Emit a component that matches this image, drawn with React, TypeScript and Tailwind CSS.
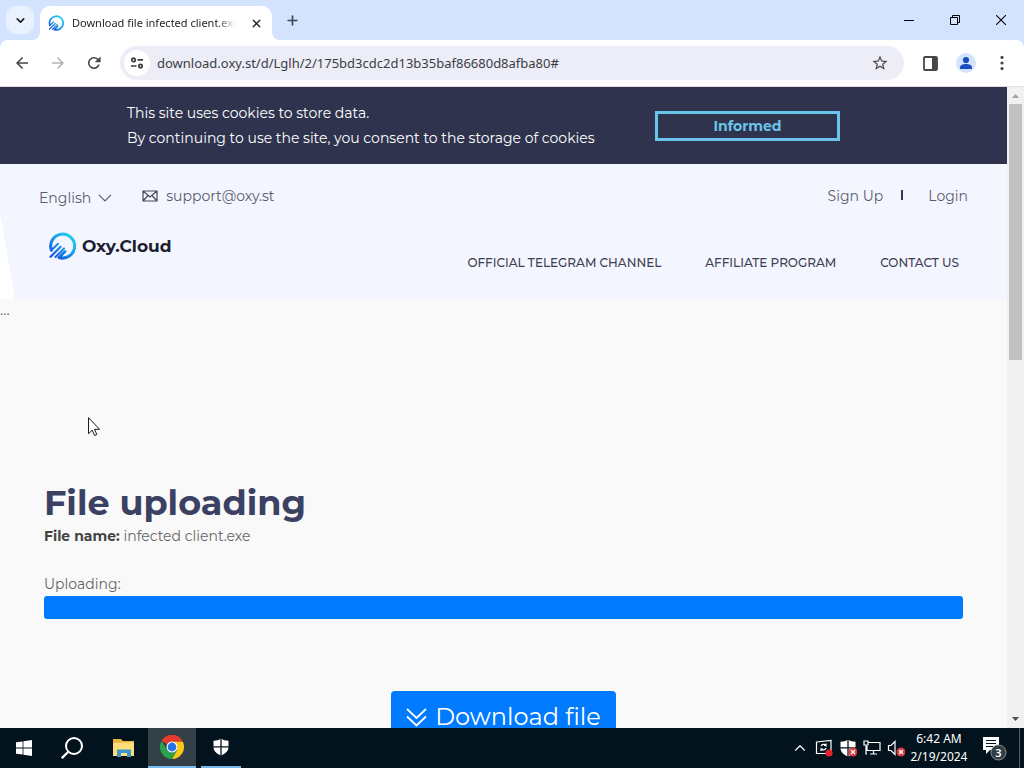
import React from "react";
import { ChevronDown, ChevronUp, Plus, X } from "lucide-react";

const site = "font-['Montserrat','Inter',sans-serif]";
const system = "font-['Noto_Sans','Open_Sans',sans-serif]";

function OxyLogo({ className, id }: { className: string; id: string }) {
  return (
    <svg viewBox="0 0 28 28" className={className} fill="none" aria-hidden="true">
      <defs>
        <linearGradient id={id} x1="24" y1="3" x2="5" y2="26" gradientUnits="userSpaceOnUse">
          <stop offset="0" stopColor="#1fd3ec" />
          <stop offset="0.5" stopColor="#1a96ea" />
          <stop offset="1" stopColor="#1450e0" />
        </linearGradient>
      </defs>
      <g stroke={`url(#${id})`} strokeLinecap="round">
        <path d="M3.4 18.2A12 12 0 1 1 11 25.500L17 19.500" strokeWidth="3" strokeLinejoin="round" />
        <path d="M3.400 18.200L10 11.800" strokeWidth="2" />
        <path d="M2.600 24.800L12.600 14.800" strokeWidth="2.200" />
        <path d="M7.500 25L16 16.500" strokeWidth="2" />
      </g>
    </svg>
  );
}

function TabStrip() {
  return (
    <div className="flex h-10 shrink-0 items-end bg-[#d3e3fd]">
      <button aria-label="Search tabs" className="mb-1.5 ml-1.5 flex size-7 items-center justify-center rounded-[10px] bg-[#e9f0fe] text-[#1f1f1f]">
        <ChevronDown size={13} strokeWidth={3} />
      </button>
      <svg viewBox="0 0 8 8" className="-ml-0.5 size-2 shrink-0 fill-white" aria-hidden="true">
        <path d="M8 0v8H0a8 8 0 0 0 8-8z" />
      </svg>
      <div className="flex h-[34px] w-[232px] items-center rounded-t-[10px] bg-white pl-2 pr-1.5">
        <OxyLogo id="tabLogo" className="size-4 shrink-0" />
        <span className="ml-2 w-[164px] overflow-hidden whitespace-nowrap text-[11px] leading-4 text-[#1f1f1f] [mask-image:linear-gradient(to_right,black_144px,transparent_164px)]">
          Download file infected client.exe
        </span>
        <button aria-label="Close tab" className="ml-auto flex size-5 shrink-0 items-center justify-center text-[#1f1f1f]">
          <X size={13} strokeWidth={2.5} />
        </button>
      </div>
      <svg viewBox="0 0 8 8" className="size-2 shrink-0 fill-white" aria-hidden="true">
        <path d="M0 0v8h8a8 8 0 0 1-8-8z" />
      </svg>
      <button aria-label="New tab" className="-ml-0.5 mb-1.5 flex size-7 items-center justify-center text-[#3c4658]">
        <Plus size={15} strokeWidth={2.6} />
      </button>
      <div className="ml-auto flex h-full text-black">
        <button aria-label="Minimize" className="flex w-[46px] items-center justify-center">
          <svg viewBox="0 0 10 10" className="size-2.5" stroke="currentColor"><path d="M0 5.5h10" /></svg>
        </button>
        <button aria-label="Restore" className="flex w-[46px] items-center justify-center">
          <svg viewBox="0 0 10 10" className="size-2.5" fill="none" stroke="currentColor"><path d="M.5 2.5h7v7h-7zM2.5 2.5v-2h7v7h-2" /></svg>
        </button>
        <button aria-label="Close" className="flex w-[46px] items-center justify-center">
          <svg viewBox="0 0 10 10" className="size-2.5" stroke="currentColor" strokeWidth="1.1"><path d="M0 0l10 10M10 0L0 10" /></svg>
        </button>
      </div>
    </div>
  );
}

function Toolbar() {
  return (
    <div className="bg-[#d3e3fd]">
      <div className="flex h-[47px] shrink-0 items-center rounded-t-lg border-b border-[#dfe1e8] bg-white pl-1 pr-1 text-[#474747]">
        <button aria-label="Back" className="flex size-9 items-center justify-center">
          <svg viewBox="0 0 24 24" className="size-[18px]" fill="currentColor"><path d="M20 10.9H7.9l5.6-5.5L12 4l-8 8 8 8 1.5-1.4-5.6-5.5H20z" /></svg>
        </button>
        <button aria-label="Forward" disabled className="flex size-9 items-center justify-center text-[#b4b4b4]">
          <svg viewBox="0 0 24 24" className="size-[18px]" fill="currentColor"><path d="M4 10.9h12.1l-5.6-5.5L12 4l8 8-8 8-1.5-1.4 5.6-5.5H4z" /></svg>
        </button>
        <button aria-label="Reload" className="flex size-9 items-center justify-center">
          <svg viewBox="0 0 24 24" className="size-[18px]" fill="currentColor"><path d="M17.65 6.35A8 8 0 1 0 19.73 14h-2.2A5.9 5.9 0 1 1 16.2 7.8L13 11h7.8V3.2z" /></svg>
        </button>
        <div className="ml-2 flex h-[34px] min-w-0 flex-1 items-center rounded-full bg-[#ecedf7] pl-1 pr-2">
          <button aria-label="View site information" className="flex size-[26px] shrink-0 items-center justify-center rounded-full bg-white">
            <svg viewBox="0 0 16 16" className="size-4" fill="none" stroke="#3c3c3c" strokeWidth="1.7">
              <circle cx="4.500" cy="4.9" r="1.7" /><path d="M8.500 4.9h5.500M2 11H7.500" /><circle cx="11.500" cy="11" r="1.7" />
            </svg>
          </button>
          <input
            aria-label="Address and search bar"
            className="ml-[7px] min-w-0 flex-1 bg-transparent text-[13px] leading-5 text-[#3b3d44] outline-none"
            defaultValue="download.oxy.st/d/Lglh/2/175bd3cdc2d13b35baf86680d8afba80#"
          />
          <button aria-label="Bookmark this tab" className="flex size-8 items-center justify-center">
            <svg viewBox="0 0 24 24" className="size-[18px]" fill="currentColor"><path d="M22 9.24l-7.19-.62L12 2 9.19 8.63 2 9.24l5.46 4.73L5.82 21 12 17.27 18.18 21l-1.63-7.03zM12 15.4l-3.76 2.27 1-4.28-3.32-2.88 4.38-.38L12 6.1l1.71 4.04 4.38.38-3.32 2.88 1 4.28z" /></svg>
          </button>
        </div>
        <button aria-label="Side panel" className="ml-2 flex size-9 items-center justify-center">
          <svg viewBox="0 0 15 15" className="size-[15px]"><rect x="1" y="1" width="13" height="13" rx="1" fill="none" stroke="currentColor" strokeWidth="1.8" /><path d="M9 1h5v13H9z" fill="currentColor" /></svg>
        </button>
        <button aria-label="Profile" className="flex size-9 items-center justify-center">
          <svg viewBox="0 0 20 20" className="size-5"><circle cx="10" cy="10" r="10" fill="#d3e3fd" /><circle cx="10" cy="7" r="3.1" fill="#1b4dc0" /><path d="M4 16v-1.6c0-2.2 3-3.4 6-3.4s6 1.2 6 3.4V16z" fill="#1b4dc0" /></svg>
        </button>
        <button aria-label="Menu" className="flex size-9 items-center justify-center">
          <svg viewBox="0 0 4 16" className="h-4 w-1" fill="currentColor"><circle cx="2" cy="2.4" r="1.6" /><circle cx="2" cy="8" r="1.6" /><circle cx="2" cy="13.6" r="1.6" /></svg>
        </button>
      </div>
    </div>
  );
}

function CookieBanner() {
  return (
    <div className="flex h-[77px] items-center bg-[#30334e] pl-[127px] text-sm text-white">
      <p className="w-[528px] leading-[25px]">
        This site uses cookies to store data.
        <br />
        By continuing to use the site, you consent to the storage of cookies
      </p>
      <button className="h-[30px] w-[185px] border-[3px] border-[#6bc5e8] text-center font-bold leading-6 text-[#6bc5e8]">
        Informed
      </button>
    </div>
  );
}

function SiteHeader() {
  return (
    <header className="relative h-[135px] bg-[#f4f6ff] pt-5 text-[#5b5d6e]">
      <svg viewBox="0 0 16 84" className="absolute bottom-0 left-0 h-[84px] w-4" aria-hidden="true">
        <path d="M0 0l3 14 12 70H0z" fill="#fff" />
      </svg>
      <div className="flex items-start pl-[39px] pr-[39px] text-sm leading-6">
        <button className="flex items-center gap-[7px] pt-0.5 leading-6">
          English
          <svg viewBox="0 0 14 8" className="h-2 w-3.5" fill="none" stroke="currentColor" strokeWidth="1.2"><path d="M1 .8l6 6 6-6" /></svg>
        </button>
        <a href="mailto:support@oxy.st" className="ml-[30px] flex items-center gap-2">
          <svg viewBox="0 0 16 12" className="h-3 w-4" fill="none" stroke="#44465a" strokeWidth="1.2"><path d="M1 1h14v10H1zM1 1l7 6 7-6M1 11l5-5.5M15 11l-5-5.5" /></svg>
          support@oxy.st
        </a>
        <a href="#signup" className="ml-auto">Sign Up</a>
        <span className="ml-[18px] mr-[25px] mt-1.5 h-2.5 w-0.5 bg-[#343a5c]" />
        <a href="#login">Login</a>
      </div>
      <div className="flex items-start pl-12 pr-12 pt-[22px]">
        <a href="#home" className="flex items-center gap-1.5 text-[17px] font-bold leading-7 text-[#1b2031]">
          <OxyLogo id="headerLogo" className="size-7" />
          Oxy.Cloud
        </a>
        <nav className="ml-auto flex gap-11 pt-[21px] text-xs font-medium leading-5 text-[#3f4152]">
          <a href="#telegram">OFFICIAL TELEGRAM CHANNEL</a>
          <a href="#affiliate">AFFILIATE PROGRAM</a>
          <a href="#contact">CONTACT US</a>
        </nav>
      </div>
    </header>
  );
}

function UploadSection() {
  return (
    <main className="text-sm leading-6 text-[#666]">
      <p className={`h-[182px] pt-0.5 text-xs leading-5 ${system}`}>...</p>
      <div className="pl-11 pr-11">
        <h1 className="text-[35px] font-bold leading-[43px] text-[#3b4162]">File uploading</h1>
        <p><b className="font-bold text-[#444]">File name:</b> infected client.exe</p>
        <p id="upload-label" className="mt-6">Uploading:</p>
        <div role="progressbar" aria-labelledby="upload-label" aria-valuenow={100} className="h-[23px] rounded-[3px] bg-[#007bff]" />
        <div className="mt-[72px] flex justify-center">
          <a href="#download" className="flex h-[52px] w-[225px] items-center justify-center gap-2 rounded bg-[#007bff] text-2xl text-white">
            <svg viewBox="0 0 21 19" className="h-[19px] w-[21px]" fill="none" stroke="currentColor" strokeWidth="1.8"><path d="M1 1l9.5 9L20 1M1 8.500l9.5 9 9.5-9" /></svg>
            Download file
          </a>
        </div>
      </div>
    </main>
  );
}

function PageScrollbar() {
  return (
    <div className="flex w-[17px] shrink-0 flex-col items-center bg-[#f1f1f1]" aria-hidden="true">
      <svg viewBox="0 0 17 17" className="size-[17px] shrink-0"><path d="M5 11l3.5-4 3.5 4z" fill="#a3a3a3" /></svg>
      <div className="h-2/5 w-[13px] bg-[#c1c1c1]" />
      <svg viewBox="0 0 17 17" className="mt-auto size-[17px] shrink-0"><path d="M5 6l3.5 4L12 6z" fill="#505050" /></svg>
    </div>
  );
}

function Pointer() {
  return (
    <svg viewBox="0 0 12 19" className="absolute left-[88px] top-[417px] h-[19px] w-3" aria-hidden="true">
      <path d="M.5.7v16l3.7-3.5 2.4 5.3 2.2-1-2.3-5.2h5z" fill="#fff" stroke="#000" strokeWidth=".9" />
    </svg>
  );
}

function Badge() {
  return <g><circle cx="14" cy="13" r="4.500" fill="#d83b3f" stroke="none" /><path d="M12 11l4 4M16 11l-4 4" stroke="#fff" strokeWidth="1.200" /></g>;
}

function Shield({ className, children }: { className: string; children?: React.ReactNode }) {
  return (
    <svg viewBox="0 0 18 18" className={className} aria-hidden="true">
      <path d="M9 .5c2 1.5 4.5 2.2 7.5 2.2V9c0 4-3 6.5-7.5 8.5C4.500 15.500 1.500 13 1.500 9V2.700C4.500 2.700 7 2 9 .5z" fill="#fff" />
      <path d="M9 0v18M1 8.800h16" stroke="#04151f" strokeWidth="1.300" />
      {children}
    </svg>
  );
}

function Taskbar() {
  const slot = "flex w-12 items-center justify-center";
  return (
    <footer className="flex h-10 shrink-0 bg-[#03131d] text-white">
      <button aria-label="Start" className={slot}>
        <svg viewBox="0 0 16 16" className="size-4" fill="#fff"><path d="M0 2.300l6.600-.9v6.200H0zM7.400 1.300L16 0v7.600H7.400zM0 8.400h6.600v6.200L0 13.700zM7.400 8.400H16V16l-8.600-1.200z" /></svg>
      </button>
      <button aria-label="Search" className={slot}>
        <svg viewBox="0 0 22 22" className="size-[22px]" fill="none" stroke="#fff" strokeWidth="2"><circle cx="13" cy="9" r="8" /><path d="M7.300 14.700L.8 21.200" strokeWidth="2.300" /></svg>
      </button>
      <button aria-label="File Explorer" className={`ml-1 ${slot}`}>
        <svg viewBox="0 0 22 18" className="h-[18px] w-[22px]"><path d="M0 0h8l2 2h11v15H0z" fill="#e9b43c" /><path d="M0 4l21-1v14H0z" fill="#fbdd7b" /><path d="M4 18v-7.500h14V18h-4v-4H8v4z" fill="#3d95cc" /></svg>
      </button>
      <button aria-label="Google Chrome" className="flex w-12 items-center justify-center border-b-2 border-[#76b9ed] bg-[#344048]">
        <svg viewBox="0 0 24 24" className="size-6">
          <path d="M12 12L1.600 6A12 12 0 0 1 22.400 6z" fill="#e33b2e" />
          <path d="M12 6.500h10.700A12 12 0 0 1 12 24l5-9z" fill="#fbc816" />
          <path d="M1.600 6l5.600 9a5.500 5.500 0 0 0 9.600 0L12 24A12 12 0 0 1 1.600 6z" fill="#2ba24c" />
          <path d="M1.600 6A12 12 0 0 1 22.700 6.500H12z" fill="#e33b2e" />
          <circle cx="12" cy="12" r="5.500" fill="#fff" /><circle cx="12" cy="12" r="4.400" fill="#2674e8" />
        </svg>
      </button>
      <button aria-label="Windows Security" className="ml-[5px] flex w-10 items-center justify-center border-b-2 border-[#76b9ed]">
        <Shield className="size-[18px]" />
      </button>
      <div className="ml-auto flex items-center">
        <button aria-label="Show hidden icons" className="flex w-6 justify-center"><ChevronUp size={18} strokeWidth={1.500} /></button>
        <svg viewBox="0 0 18 18" className="mx-[3px] size-[18px]" fill="none" stroke="#fff" strokeWidth="1.200"><path d="M1.500 3L16 1.500v13H1.500zM6 7a3 3 0 0 1 5-.5V4.500M11 6.500H9M11 9a3 3 0 0 1-5 1v2M6 10h2" /><circle cx="14" cy="14" r="3.600" fill="#e2232e" stroke="none" /></svg>
        <Shield className="mx-[3px] size-[18px]"><Badge /></Shield>
        <svg viewBox="0 0 18 18" className="mx-[3px] size-[18px]" fill="none" stroke="#fff" strokeWidth="1.200"><path d="M5 3.500h12v8H4V7M10.500 11.500V15M7 15h7M1 2h4v4H1zM3 6v9h1" /></svg>
        <svg viewBox="0 0 18 18" className="mx-[3px] size-[18px]" fill="none" stroke="#fff" strokeWidth="1.200"><path d="M1.500 6.500H4l4-4v13l-4-4H1.500z" /><Badge /></svg>
        <div className="w-[62px] text-center text-xs leading-[18px]">
          <div>6:42 AM</div>
          <div>2/19/2024</div>
        </div>
        <button aria-label="3 notifications" className="ml-3 mr-[11px]">
          <svg viewBox="0 0 26 26" className="size-[26px]">
            <path d="M1 2h16v13H8l-4 4v-4H1z" fill="#fff" /><path d="M4 5.500h10M4 8.500h10M4 11.500h7" stroke="#03131d" strokeWidth="1.200" />
            <circle cx="16.500" cy="17.500" r="7.500" fill="#343c44" stroke="#8a9096" />
            <text x="16.500" y="21.500" textAnchor="middle" fontSize="11" fontWeight="600" fill="#fff">3</text>
          </svg>
        </button>
        <span className="h-10 w-[5px] border-l border-[#53606a]" />
      </div>
    </footer>
  );
}

export default function App() {
  return (
    <div className={`relative flex h-screen flex-col overflow-hidden ${system}`}>
      <TabStrip />
      <Toolbar />
      <div className="flex min-h-0 flex-1">
        <div className={`min-w-0 flex-1 overflow-hidden bg-[#f9f9f9] ${site}`}>
          <CookieBanner />
          <SiteHeader />
          <UploadSection />
        </div>
        <PageScrollbar />
      </div>
      <Taskbar />
      <Pointer />
    </div>
  );
}
